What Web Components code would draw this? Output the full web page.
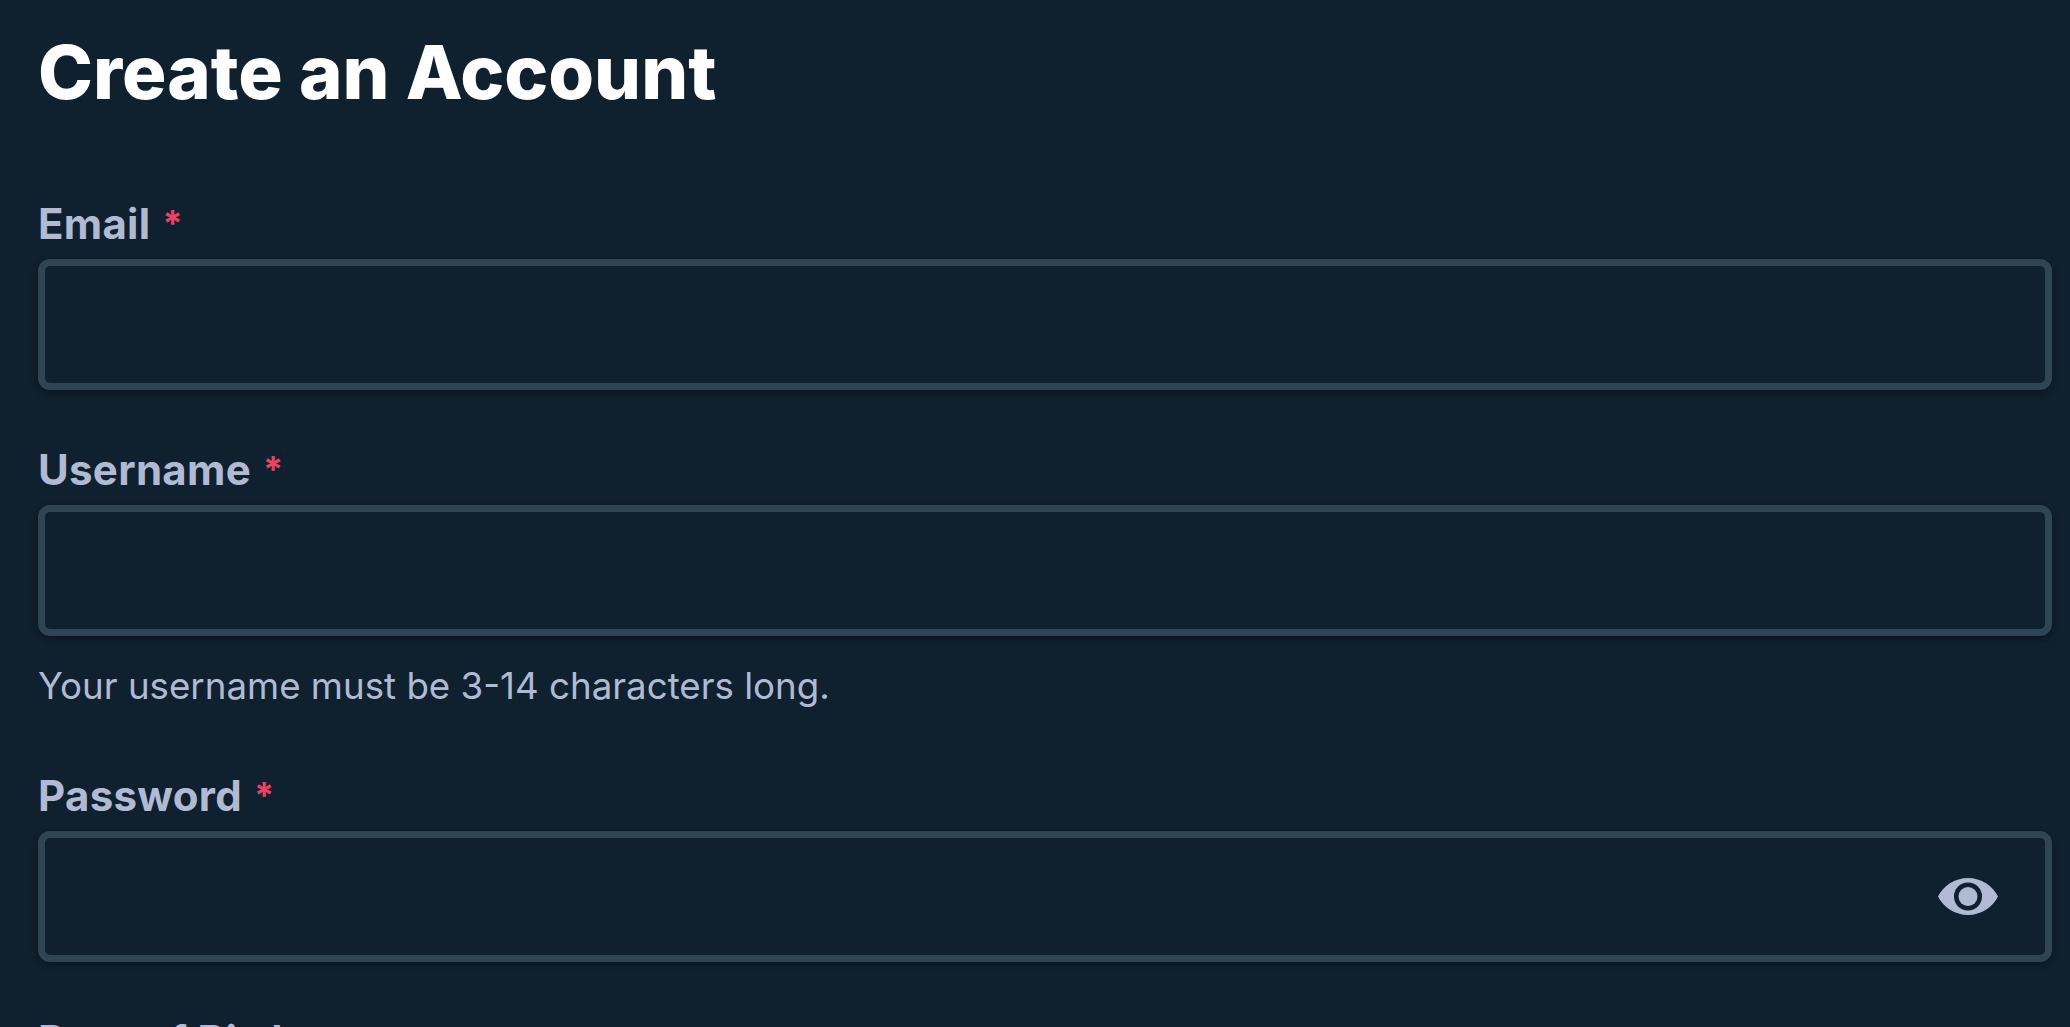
<!DOCTYPE html>
<html lang="en">
<head>
<meta charset="utf-8">
<title>Create an Account</title>
<style>
  html, body { margin: 0; height: 100%; background: #0f212e; overflow: hidden; }
</style>
</head>
<body>
<signup-form>
  <form-field label="Email" required><text-input type="email"></text-input></form-field>
  <form-field label="Username" required>
    <text-input type="text"></text-input>
    <span slot="hint">Your username must be 3-14 characters long.</span>
  </form-field>
  <form-field label="Password" required><text-input type="password" reveal></text-input></form-field>
  <form-field label="Date of Birth" required><text-input type="text"></text-input></form-field>
</signup-form>

<script>
class SignupForm extends HTMLElement {
    constructor() {
        super();
        this.attachShadow({ mode: 'open' }).innerHTML = `
            <style>
                :host {
                    display: block;
                    padding: 28px 18px 0 38px;
                    font-family: "Inter", "Liberation Sans", sans-serif;
                }
                h1 {
                    margin: 0 0 81px;
                    font-size: 74px;
                    line-height: 88px;
                    font-weight: 800;
                    color: #fff;
                }
                .fields {
                    display: flex;
                    flex-direction: column;
                    gap: 52.500px;
                }
            </style>
            <h1>Create an Account</h1>
            <div class="fields"><slot></slot></div>
        `;
    }
}

class FormField extends HTMLElement {
    constructor() {
        super();
        this.attachShadow({ mode: 'open' }).innerHTML = `
            <style>
                :host {
                    display: block;
                    color: #b1bad3;
                }
                .label {
                    display: block;
                    font-size: 42px;
                    line-height: 52px;
                    font-weight: 700;
                    letter-spacing: 0.3px;
                    margin-bottom: 9px;
                }
                .req {
                    color: #ed4163;
                    margin-left: 12px;
                    font-size: 36px;
                    font-weight: 700;
                    vertical-align: 3px;
                }
                .hint {
                    font-size: 36.700px;
                    line-height: 46px;
                    margin: 27px 0 7.500px;
                }
                .hint:not(.on) { display: none; }
            </style>
            <span class="label"><span class="text"></span><span class="req">*</span></span>
            <slot></slot>
            <div class="hint"><slot name="hint"></slot></div>
        `;
    }

    connectedCallback() {
        const root = this.shadowRoot;
        root.querySelector('.text').textContent = this.getAttribute('label') || '';
        root.querySelector('.req').hidden = !this.hasAttribute('required');
        if (this.querySelector('[slot="hint"]')) root.querySelector('.hint').classList.add('on');
    }
}

class TextInput extends HTMLElement {
    constructor() {
        super();
        this.attachShadow({ mode: 'open' }).innerHTML = `
            <style>
                :host {
                    display: flex;
                    align-items: center;
                    box-sizing: border-box;
                    height: 131px;
                    border: 7px solid #2f4553;
                    border-radius: 12px;
                    background: #0f212e;
                    box-shadow: 0 3px 8px rgba(0, 0, 0, .2), 0 3px 5px rgba(0, 0, 0, .12);
                }
                input {
                    flex: 1;
                    min-width: 0;
                    height: 100%;
                    box-sizing: border-box;
                    padding: 0 26px;
                    border: 0;
                    outline: 0;
                    background: transparent;
                    color: #fff;
                    font: 500 37px "Inter", "Liberation Sans", sans-serif;
                }
                button {
                    display: flex;
                    padding: 0;
                    margin-right: 47px;
                    border: 0;
                    background: none;
                    color: #b1bad3;
                }
            </style>
            <input>
        `;
    }

    connectedCallback() {
        const input = this.shadowRoot.querySelector('input');
        input.type = this.getAttribute('type') || 'text';
        if (this.hasAttribute('reveal')) {
            const btn = document.createElement('button');
            btn.type = 'button';
            btn.setAttribute('aria-label', 'Show password');
            btn.innerHTML = `
                <svg width="60" height="37" viewBox="0 0 60 37">
                    <path fill="#b1bad3" d="M0 18.500C5 8 17 0 30 0s25 8 30 18.500C55 29 43 37 30 37S5 29 0 18.500Z"/>
                    <circle cx="30" cy="18.500" r="14" fill="#0f212e"/>
                    <circle cx="30" cy="18.500" r="9.500" fill="#b1bad3"/>
                </svg>`;
            this.shadowRoot.appendChild(btn);
        }
    }
}

customElements.define('signup-form', SignupForm);
customElements.define('form-field', FormField);
customElements.define('text-input', TextInput);
</script>
</body>
</html>
